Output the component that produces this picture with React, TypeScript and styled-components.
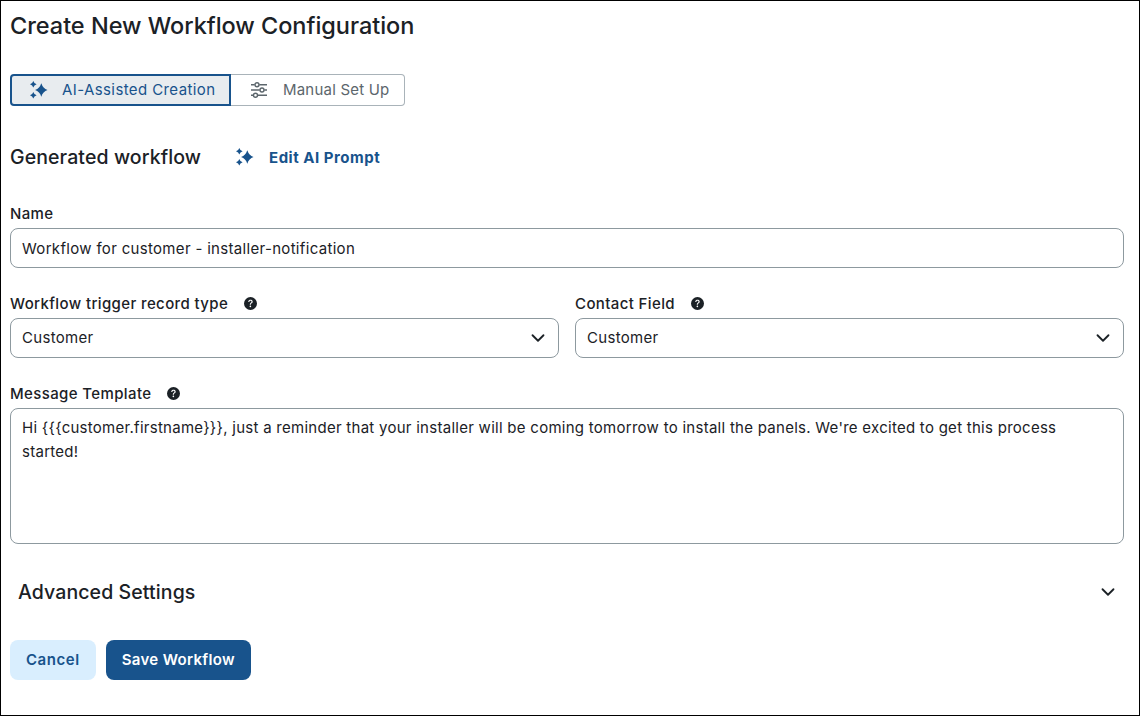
import styled, { createGlobalStyle } from 'styled-components';
import { ChevronDown } from 'lucide-react';
import { BsQuestionCircleFill } from 'react-icons/bs';

const ink = '#1b2126';
const navy = '#18538c';
const line = '#8d999f';

const Global = createGlobalStyle`
  html, body {
    margin: 0;
    padding: 0;
    background: #fff;
  }
  * {
    box-sizing: border-box;
  }
`;

const Sparkles = () => (
  <svg width="20" height="20" viewBox="0 0 20 20" fill={navy}>
    <path d="M12.3 3.3Q13.9 8.4 18.5 10Q13.9 11.6 12.3 16.7Q10.7 11.6 6.1 10Q10.700 8.400 12.3 3.3z" />
    <path d="M4.300 1Q5 3.600 7.600 4.300Q5 5 4.300 7.600Q3.600 5 1 4.300Q3.600 3.600 4.300 1z" />
    <path d="M4.300 12Q5 14.600 7.600 15.300Q5 16 4.300 18.600Q3.600 16 1 15.300Q3.600 14.600 4.300 12z" />
  </svg>
);

const Sliders = () => (
  <svg width="16" height="16" viewBox="0 0 16 16" fill="none" stroke="#5c666c" strokeWidth="1.4">
    <path d="M0 2.700h3.700M8.300 2.700H16M0 8h8.700M13.300 8H16M0 13.300h2.200M6.800 13.300H16" />
    <circle cx="6" cy="2.700" r="2" />
    <circle cx="11" cy="8" r="2" />
    <circle cx="4.500" cy="13.300" r="2" />
  </svg>
);

const Page = styled.main`
  width: 1140px;
  height: 716px;
  border: 1px solid #000;
  padding: 0 15px 0 9px;
  font-family: Inter, 'Liberation Sans', sans-serif;
  color: ${ink};
  overflow: hidden;
`;

const Title = styled.h1`
  margin: 0;
  height: 50px;
  font-size: 23.5px;
  line-height: 50px;
  font-weight: 500;
  letter-spacing: -0.03px;
`;

const Toggle = styled.div`
  display: flex;
  width: 395px;
  height: 32px;
  margin-top: 23px;
`;

const ToggleItem = styled.div<{ $active?: boolean }>`
  display: flex;
  align-items: center;
  height: 32px;
  padding-bottom: 1px;
  font-size: 15px;
  ${(p) =>
    p.$active
      ? `
    width: 221px;
    gap: 13px;
    padding-left: 17px;
    color: ${navy};
    background: #e8ecef;
    border: 2px solid ${navy};
    border-radius: 4px 0 0 4px;
    letter-spacing: 0.4px;
  `
      : `
    flex: 1;
    gap: 16px;
    padding-left: 20px;
    color: #5c666c;
    border: 1px solid #a9b3b9;
    border-left: 0;
    border-radius: 0 4px 4px 0;
    letter-spacing: 0.2px;
  `}
`;

const GeneratedRow = styled.div`
  display: flex;
  align-items: center;
  height: 32px;
  margin-top: 35px;
`;

const SectionTitle = styled.h2`
  margin: 0;
  width: 225px;
  font-size: 19.5px;
  font-weight: 500;
  letter-spacing: 0.1px;
`;

const EditPrompt = styled.a`
  display: flex;
  align-items: center;
  gap: 14px;
  color: ${navy};
  font-size: 15px;
  font-weight: 700;
  letter-spacing: 0.52px;
`;

const Field = styled.div`
  display: flex;
  flex-direction: column;
  min-width: 0;
`;

const NameField = styled(Field)`
  margin-top: 27px;
`;

const Label = styled.label`
  display: flex;
  align-items: center;
  gap: 16px;
  height: 28px;
  padding-bottom: 1px;
  font-size: 15px;
  font-weight: 500;
  letter-spacing: 0.38px;
`;

const TextInput = styled.input`
  width: 100%;
  height: 40px;
  padding: 0 11px;
  border: 1px solid ${line};
  border-radius: 8px;
  background: #fff;
  color: ${ink};
  font: 400 15px Inter, 'Liberation Sans', sans-serif;
  letter-spacing: 0.32px;
  outline: none;
`;

const Columns = styled.div`
  display: grid;
  grid-template-columns: 549px 549px;
  gap: 16px;
  margin-top: 22px;
`;

const Select = styled.div`
  display: flex;
  align-items: center;
  justify-content: space-between;
  height: 40px;
  padding: 0 9px 1px 11px;
  border: 1px solid ${line};
  border-radius: 8px;
  font-size: 15px;
  letter-spacing: 0.32px;
`;

const MessageField = styled(Field)`
  margin-top: 22px;
`;

const MessageArea = styled.textarea`
  display: block;
  width: 100%;
  height: 136px;
  padding: 7px 11px;
  border: 1px solid ${line};
  border-radius: 8px;
  background: #fff;
  color: ${ink};
  font: 400 15px/24px Inter, 'Liberation Sans', sans-serif;
  letter-spacing: 0.27px;
  resize: none;
  outline: none;
`;

const Advanced = styled.div`
  display: flex;
  align-items: center;
  justify-content: space-between;
  height: 32px;
  margin-top: 32px;
  padding: 0 5px 0 8px;
`;

const Actions = styled.div`
  display: flex;
  gap: 10px;
  margin-top: 32px;
`;

const Button = styled.button<{ $primary?: boolean }>`
  height: 40px;
  padding: 0 16px 1px;
  border: 0;
  border-radius: 8px;
  background: ${(p) => (p.$primary ? navy : '#d9eefe')};
  color: ${(p) => (p.$primary ? '#fff' : navy)};
  font: 600 15px Inter, 'Liberation Sans', sans-serif;
  letter-spacing: ${(p) => (p.$primary ? '0.33px' : '0.55px')};
`;

export default function App() {
  return (
    <Page>
      <Global />
      <Title>Create New Workflow Configuration</Title>
      <Toggle>
        <ToggleItem $active>
          <Sparkles />
          AI-Assisted Creation
        </ToggleItem>
        <ToggleItem>
          <Sliders />
          Manual Set Up
        </ToggleItem>
      </Toggle>
      <GeneratedRow>
        <SectionTitle>Generated workflow</SectionTitle>
        <EditPrompt>
          <Sparkles />
          Edit AI Prompt
        </EditPrompt>
      </GeneratedRow>
      <NameField>
        <Label>Name</Label>
        <TextInput readOnly value="Workflow for customer - installer-notification" />
      </NameField>
      <Columns>
        <Field>
          <Label>
            Workflow trigger record type
            <BsQuestionCircleFill size={13} />
          </Label>
          <Select>
            Customer
            <ChevronDown size={22} strokeWidth={2} />
          </Select>
        </Field>
        <Field>
          <Label>
            Contact Field
            <BsQuestionCircleFill size={13} />
          </Label>
          <Select>
            Customer
            <ChevronDown size={22} strokeWidth={2} />
          </Select>
        </Field>
      </Columns>
      <MessageField>
        <Label>
          Message Template
          <BsQuestionCircleFill size={13} />
        </Label>
        <MessageArea
          readOnly
          value="Hi {{{customer.firstname}}}, just a reminder that your installer will be coming tomorrow to install the panels. We're excited to get this process started!"
        />
      </MessageField>
      <Advanced>
        <SectionTitle>Advanced Settings</SectionTitle>
        <ChevronDown size={22} strokeWidth={2} />
      </Advanced>
      <Actions>
        <Button>Cancel</Button>
        <Button $primary>Save Workflow</Button>
      </Actions>
    </Page>
  );
}
